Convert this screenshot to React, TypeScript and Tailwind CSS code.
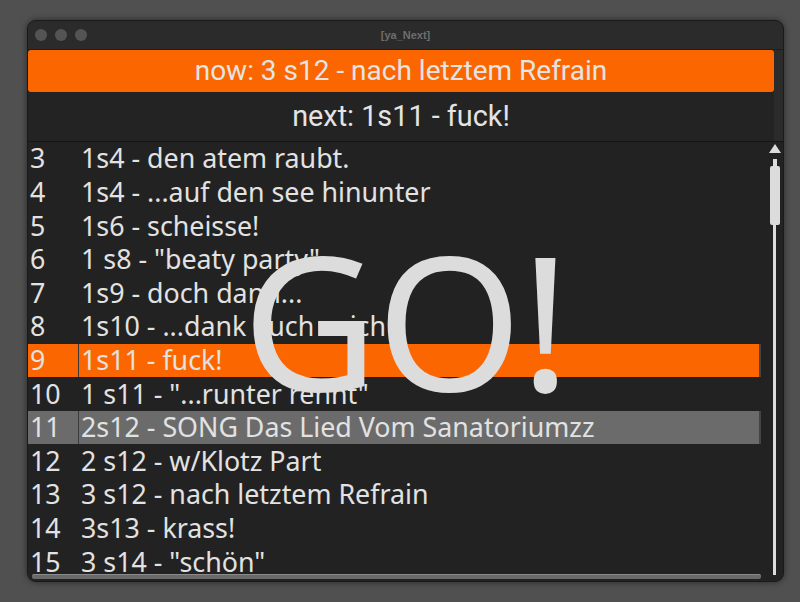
import React from "react";

const rows: { n: string; t: string; kind?: "orange" | "gray" }[] = [
  { n: "3", t: "1s4 - den atem raubt." },
  { n: "4", t: "1s4 - ...auf den see hinunter" },
  { n: "5", t: "1s6 - scheisse!" },
  { n: "6", t: '1 s8 - "beaty party"' },
  { n: "7", t: "1s9 - doch dann..." },
  { n: "8", t: "1s10 - ...dank auch - sich" },
  { n: "9", t: "1s11 - fuck!", kind: "orange" },
  { n: "10", t: '1 s11 - "...runter rennt"' },
  { n: "11", t: "2s12 - SONG Das Lied Vom Sanatoriumzz", kind: "gray" },
  { n: "12", t: "2 s12 - w/Klotz Part" },
  { n: "13", t: "3 s12 - nach letztem Refrain" },
  { n: "14", t: "3s13 - krass!" },
  { n: "15", t: '3 s14 - "schön"' },
];

export default function App() {
  return (
    <div className="w-[800px] h-[602px] bg-[#505050] pt-[20px] pl-[27px]" style={{ fontFamily: '"Noto Sans", sans-serif' }}>
      <div className="w-[757px] h-[562px] rounded-[9px] bg-[#2b2b2b] border border-[#1a1a1a] flex flex-col overflow-hidden shadow-[0_0_6px_rgba(0,0,0,0.5)]">
        {/* title bar */}
        <div className="h-[28px] relative flex items-center pl-[7px] gap-[8px] shrink-0">
          <div className="w-[12px] h-[12px] rounded-full bg-[#545454]" />
          <div className="w-[12px] h-[12px] rounded-full bg-[#545454]" />
          <div className="w-[12px] h-[12px] rounded-full bg-[#545454]" />
          <div className="absolute inset-0 flex items-center justify-center text-[11px] font-bold text-[#6e6e6e]" style={{ fontFamily: '"Liberation Sans", sans-serif' }}>
            [ya_Next]
          </div>
        </div>
        <div className="h-[1px] bg-[#1e1e1e] shrink-0" />
        {/* now bar */}
        <div className="h-[42px] shrink-0 mr-[9px] bg-[#fc6600] rounded-[3px] flex items-center justify-center text-[#e4e4e4] text-[28px] leading-none" style={{ fontFamily: "Roboto, sans-serif" }}>
          now: 3 s12 - nach letztem Refrain
        </div>
        <div className="h-[49px] shrink-0 flex">
          <div className="flex-1 mr-[9px] bg-[#232323] flex items-center justify-center text-[#e4e4e4] text-[28.8px] leading-none" style={{ fontFamily: "Roboto, sans-serif" }}>
            next: 1s11 - fuck!
          </div>
        </div>
        <div className="h-[1px] shrink-0 bg-[#151515]" />
        {/* list */}
        <div className="flex-1 min-h-0 flex bg-[#222222] relative">
          <div className="flex-1 flex flex-col min-h-0">
            <div className="flex-1 min-h-0 overflow-hidden flex flex-col pr-[4px]">
              {rows.map((r) => {
                const bg = r.kind === "orange" ? "bg-[#fc6600]" : r.kind === "gray" ? "bg-[#6b6b6b]" : "";
                return (
                  <div key={r.n} className={`h-[33.6px] shrink-0 flex items-center text-[26.8px] text-[#e2e2e2] leading-none ${bg}`}>
                    <div className={`w-[51px] pl-[2px] h-full flex items-center ${r.kind ? "border-r border-[#3a3a3a]" : ""}`}>{r.n}</div>
                    <div className={`flex-1 pl-[2px] h-full flex items-center ${r.kind ? "border-r-[2px] border-[#444]" : ""}`}>{r.t}</div>
                  </div>
                );
              })}
            </div>
            <div className="h-[5px] shrink-0 mx-[4px] mb-[2px] bg-[#6a6a6a] border-t border-[#8a8a8a] rounded-[2px]" />
          </div>
          {/* scrollbar */}
          <div className="w-[18px] relative flex flex-col items-center pt-[2px] pl-[1px]">
            <div className="w-0 h-0 border-l-[6px] border-r-[6px] border-b-[9px] border-l-transparent border-r-transparent border-b-[#dcdcdc]" />
            <div className="w-[4px] h-[7px] bg-[#dcdcdc] mt-[6px]" />
            <div className="w-[10px] h-[59px] bg-[#dcdcdc] rounded-[2px]" />
            <div className="w-[3px] flex-1 bg-[#dcdcdc] mb-[6px]" />
          </div>
          {/* GO overlay */}
          <div className="absolute left-[214px] top-[83px] text-[#dcdcdc] text-[187px] leading-none pointer-events-none tracking-[-2px]" style={{ fontFamily: '"Noto Sans", sans-serif' }}>
            GO!
          </div>
        </div>
      </div>
    </div>
  );
}
